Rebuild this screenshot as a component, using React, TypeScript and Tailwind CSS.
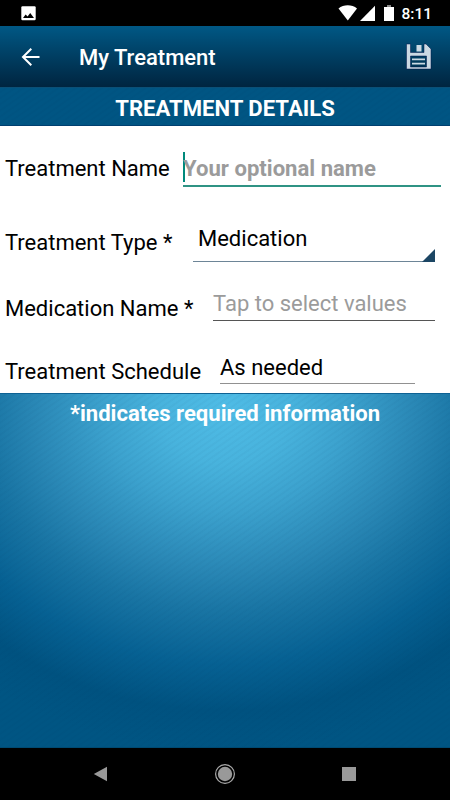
import type { ReactNode } from 'react';

type RowProps = {
  label: string;
  className: string;
  children: ReactNode;
};

function StatusBar() {
  return (
    <div className="flex h-[26px] shrink-0 items-center bg-black pl-[21px] pr-[18px] text-white">
      <svg width="15" height="15" viewBox="0 0 15 15">
        <rect x="0.3" y="0.3" width="14.4" height="14" rx="1.2" fill="#fff" />
        <path d="M2 12l2.6-3.4 2 2L9.2 7l3.8 5z" fill="#000" />
      </svg>
      <div className="flex-1" />
      <svg width="60" height="18" viewBox="0 0 60 18" className="mr-[3px]">
        <path d="M0.5 4.6C5.5 0.2 14 0.2 19 4.6L9.8 16.4z" fill="#fff" />
        <path d="M37 1.8V17H22z" fill="#fff" />
        <path d="M46 3h10v14H46z" fill="#fff" />
        <path d="M49 1h4v2h-4z" fill="#888" />
      </svg>
      <span className="mt-[3px] text-[15.5px] leading-none font-medium">8:11</span>
    </div>
  );
}

function AppBar() {
  return (
    <header className="flex h-[61px] shrink-0 items-center bg-linear-to-b from-[#005885] via-[#003e62] to-[#002540] pl-[21px] pr-[18px] text-white">
      <svg width="20" height="20" viewBox="0 0 20 20" fill="none" stroke="#fff" strokeWidth="2">
        <path d="M18.5 10H2.4M10.3 1.8L2 10l8.3 8.2" />
      </svg>
      <h1 className="ml-[38px] flex-1 pt-0.5 text-[22px] leading-none font-medium">My Treatment</h1>
      <svg width="26" height="27" viewBox="0 0 26 27">
        <path
          fillRule="evenodd"
          fill="#cbd9e3"
          stroke="#00144a"
          strokeWidth="0.5"
          d="M0.5 1H4.5V9.5H18V1H20L25 6V26H0.5zM4.5 13V24H20.5V13z"
        />
        <path d="M10.5 2h5v6.5h-5zM6 15.5h13v1.8H6zM6 19.7h13v1.8H6z" fill="#cbd9e3" />
      </svg>
    </header>
  );
}

function Row({ label, className, children }: RowProps) {
  return (
    <div className={`flex pl-[5px] ${className}`}>
      <label className="self-end text-[22px] leading-[26px] whitespace-nowrap">{label}</label>
      {children}
    </div>
  );
}

function NavBar() {
  return (
    <nav className="flex h-[52px] shrink-0 items-center bg-black pl-[93px] pr-[94px]">
      <svg width="15" height="16" viewBox="0 0 15 16" className="mr-[106px]">
        <path d="M14 0.7v14.6L0.8 8z" fill="#999" />
      </svg>
      <svg width="22" height="22" viewBox="0 0 22 22">
        <circle cx="11" cy="11" r="9.4" fill="none" stroke="#aaa" strokeWidth="1.2" />
        <circle cx="11" cy="11" r="7.2" fill="#999" />
      </svg>
      <div className="ml-auto size-3.5 bg-[#999]" />
    </nav>
  );
}

export default function App() {
  return (
    <div className="flex h-[800px] w-[450px] flex-col overflow-hidden bg-[#005583] font-[Roboto,sans-serif]">
      <StatusBar />
      <AppBar />
      <h2 className="flex h-[39px] shrink-0 items-center justify-center border-y border-t-[#0b5077] border-b-[#003f70] bg-[#005583] bg-[repeating-linear-gradient(145deg,transparent_0px_2px,rgba(0,40,80,0.04)_3px_4px,transparent_5px)] pt-[3px] text-[22.1px] leading-none font-bold text-white">
        TREATMENT DETAILS
      </h2>

      <main className="h-[267px] shrink-0 bg-white text-black">
        <Row label="Treatment Name" className="h-[61px] pb-[5px]">
          <div className="-mb-[5px] ml-auto mr-[9px] flex w-[258px] items-end border-b-2 border-[#2f9384]">
            <span className="mb-[3px] h-[30px] w-0.5 -mr-0.5 bg-[#00897b]" />
            <span className="mb-1 text-[22.1px] leading-[26px] font-bold text-[#9b9b9b]">Your optional name</span>
          </div>
        </Row>

        <Row label="Treatment Type *" className="h-[75px] pb-[6px]">
          <div className="relative -mb-[6px] ml-auto mr-[15px] flex w-[242px] items-end border-b border-[#6d8597] pb-[9px] pl-[5px]">
            <span className="text-[22px] leading-[26px]">Medication</span>
            <svg width="13" height="13" viewBox="0 0 13 13" className="absolute right-0 -bottom-px">
              <path d="M13 0v13H0z" fill="#1c4664" />
            </svg>
          </div>
        </Row>

        {/* Medication picker */}
        <Row label="Medication Name *" className="h-[60px]">
          <div className="mb-px ml-auto mr-[15px] flex w-[222px] items-end border-b border-[#555] pb-[3px]">
            <span className="text-[22px] leading-[26px] text-[#9b9b9b]">Tap to select values</span>
          </div>
        </Row>

        <Row label="Treatment Schedule" className="h-[63px]">
          <div className="mb-px ml-auto mr-[35px] flex w-[195px] items-end border-b border-[#919191] pb-[2px]">
            <span className="text-[22px] leading-[26px]">As needed</span>
          </div>
        </Row>
      </main>

      <section className="flex-1 border-y border-t-[#0e6294] border-b-[#004a72] bg-[repeating-linear-gradient(145deg,transparent_0px_2px,rgba(0,40,80,0.03)_3px_4px,transparent_5px),radial-gradient(368px_312px_at_50%_14px,#4fbce6_0%,#48b3dd_18%,#3ca2ce_33%,#2987b5_52%,#1975a4_65%,#066193_82%,#005280_97%,#005583_110%)] pt-[6px] text-center text-[22.1px] leading-[26px] font-bold text-white">
        *indicates required information
      </section>
      <NavBar />
    </div>
  );
}
